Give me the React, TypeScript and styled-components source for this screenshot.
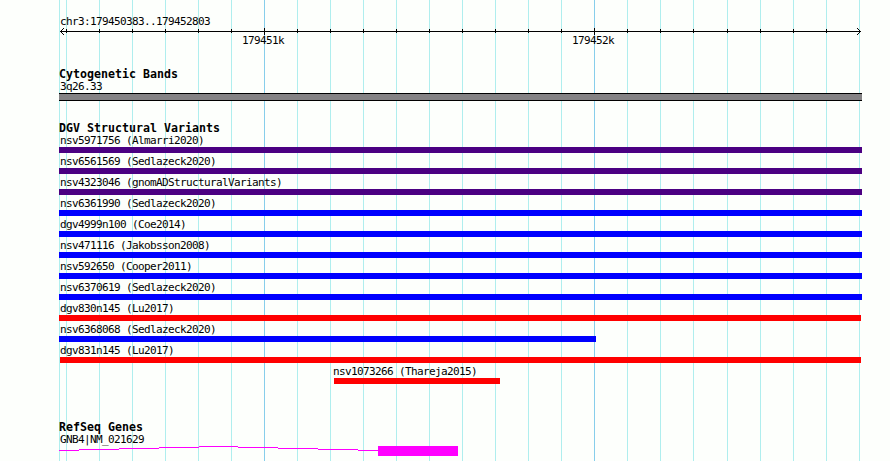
import React from "react";
import styled, { createGlobalStyle } from "styled-components";

const GlobalStyle = createGlobalStyle`
  html, body { margin: 0; padding: 0; background: #fdfffc; }
`;

const LEFT = 59;
const minorLines = [
  66, 99, 132, 165, 198, 231, 297, 330, 363, 396, 429, 462, 495, 528, 561, 627,
  660, 693, 727, 760, 793, 826, 859,
];
const majorLines = [264, 594];

const INDIGO = "#4b0082";
const BLUE = "#0000ff";
const RED = "#ff0000";

type Variant = { name: string; color: string; start: number; end: number; labelAt?: number };

const variants: Variant[] = [
  { name: "nsv5971756 (Almarri2020)", color: INDIGO, start: 59, end: 862 },
  { name: "nsv6561569 (Sedlazeck2020)", color: INDIGO, start: 59, end: 862 },
  { name: "nsv4323046 (gnomADStructuralVariants)", color: INDIGO, start: 59, end: 862 },
  { name: "nsv6361990 (Sedlazeck2020)", color: BLUE, start: 59, end: 862 },
  { name: "dgv4999n100 (Coe2014)", color: BLUE, start: 59, end: 862 },
  { name: "nsv471116 (Jakobsson2008)", color: BLUE, start: 59, end: 862 },
  { name: "nsv592650 (Cooper2011)", color: BLUE, start: 59, end: 862 },
  { name: "nsv6370619 (Sedlazeck2020)", color: BLUE, start: 59, end: 862 },
  { name: "dgv830n145 (Lu2017)", color: RED, start: 59, end: 861 },
  { name: "nsv6368068 (Sedlazeck2020)", color: BLUE, start: 59, end: 596 },
  { name: "dgv831n145 (Lu2017)", color: RED, start: 60, end: 861 },
  { name: "nsv1073266 (Thareja2015)", color: RED, start: 334, end: 500, labelAt: 333 },
];

const Browser = styled.main`
  position: relative;
  box-sizing: border-box;
  width: 890px;
  height: 461px;
  overflow: hidden;
  padding-left: ${LEFT}px;
  background: #fdfffc;
  color: #000;
  font-family: "DejaVu Sans Mono", monospace;
  font-size: 11px;
`;

const GridLines = styled.svg`
  position: absolute;
  inset: 0;
`;

const Tracks = styled.div`
  position: relative;
  display: flex;
  flex-direction: column;
`;

const Region = styled.header`
  display: flex;
  flex-direction: column;
  height: 66px;
  padding-top: 13px;
  box-sizing: border-box;
`;

const Label = styled.div<{ $indent?: number }>`
  height: 15px;
  line-height: 17px;
  padding-left: ${({ $indent = 1 }) => $indent}px;
  letter-spacing: -0.622px;
  white-space: pre;
`;

const Ruler = styled.svg`
  display: block;
  flex: none;
`;

const Scale = styled.div`
  display: flex;
  gap: 288px;
  height: 12px;
  margin-top: -3px;
  padding-left: 183px;
  line-height: 17px;
  letter-spacing: -0.622px;
`;

const ScaleMark = styled.span`
  width: 42px;
`;

const Track = styled.section<{ $height?: number }>`
  height: ${({ $height }) => ($height ? `${$height}px` : "auto")};
`;

const Title = styled.h2`
  margin: 0;
  height: 12px;
  font-size: 11.6px;
  font-weight: 700;
  line-height: 17px;
  letter-spacing: 0.017px;
  white-space: pre;
`;

const Band = styled.div`
  box-sizing: border-box;
  width: 803px;
  height: 8px;
  border: solid #000;
  border-width: 1px 0;
  background: #848284;
`;

const VariantRow = styled.div`
  height: 21px;
`;

const VariantBar = styled.div<{ $start: number; $end: number; $color: string }>`
  width: ${({ $start, $end }) => $end - $start}px;
  height: 6px;
  margin-left: ${({ $start }) => $start - LEFT}px;
  background: ${({ $color }) => $color};
`;

export default function App() {
  return (
    <>
      <GlobalStyle />
      <Browser>
        <GridLines width="890" height="461" shapeRendering="crispEdges">
          {[LEFT, ...minorLines].map((x) => (
            <rect key={x} x={x} y={0} width={1} height={461} fill="#afeeee" />
          ))}
          {majorLines.map((x) => (
            <rect key={x} x={x} y={0} width={1} height={461} fill="#87ceeb" />
          ))}
        </GridLines>
        <Tracks>
          <Region>
            <Label>chr3:179450383..179452803</Label>
            <Ruler width="804" height="7" viewBox="59 28 804 7" shapeRendering="crispEdges">
              <rect x={60} y={31} width={801} height={1} />
              {minorLines.slice(0, -1).map((x) => (
                <rect key={x} x={x} y={29} width={1} height={4} />
              ))}
              {majorLines.map((x) => (
                <rect key={x} x={x} y={28} width={1} height={7} />
              ))}
              {[1, 2, 3].map((d) => (
                <React.Fragment key={d}>
                  <rect x={60 + d} y={31 - d} width={1} height={1} />
                  <rect x={60 + d} y={31 + d} width={1} height={1} />
                  <rect x={860 - d} y={31 - d} width={1} height={1} />
                  <rect x={860 - d} y={31 + d} width={1} height={1} />
                </React.Fragment>
              ))}
            </Ruler>
            <Scale>
              <ScaleMark>179451k</ScaleMark>
              <ScaleMark>179452k</ScaleMark>
            </Scale>
          </Region>
          <Track $height={54}>
            <Title>Cytogenetic Bands</Title>
            <Label>3q26.33</Label>
            <Band />
          </Track>
          <Track $height={299}>
            <Title>DGV Structural Variants</Title>
            {variants.map((v) => (
              <VariantRow key={v.name}>
                <Label $indent={(v.labelAt ?? 60) - LEFT}>{v.name}</Label>
                <VariantBar $start={v.start} $end={v.end} $color={v.color} />
              </VariantRow>
            ))}
          </Track>
          <Track>
            <Title>RefSeq Genes</Title>
            <Label>GNB4|NM_021629</Label>
            <Ruler width="400" height="10" viewBox="59 446 400 10" shapeRendering="crispEdges" fill="#ff00ff">
              <rect x={59} y={450} width={20} height={1} />
              <rect x={79} y={449} width={40} height={1} />
              <rect x={119} y={448} width={40} height={1} />
              <rect x={159} y={447} width={40} height={1} />
              <rect x={199} y={446} width={39} height={1} />
              <rect x={238} y={447} width={40} height={1} />
              <rect x={278} y={448} width={40} height={1} />
              <rect x={318} y={449} width={40} height={1} />
              <rect x={358} y={450} width={20} height={1} />
              <rect x={378} y={446} width={80} height={10} />
            </Ruler>
          </Track>
        </Tracks>
      </Browser>
    </>
  );
}
